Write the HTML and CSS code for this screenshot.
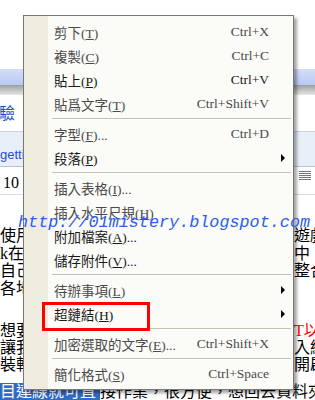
FILE: index.html
```html
<!DOCTYPE html>
<html lang="zh-Hant">

<head>
    <meta charset="UTF-8">
    <title>右鍵選單</title>
    <link rel="stylesheet" href="styles.css">
</head>

<body>
    <div class="screen">
        <!-- 背景的郵件編輯頁面 -->
        <div class="page">
            <div class="top_space"></div>
            <div class="tab_bar"></div>
            <div class="tab_shadow"></div>
            <div class="subject_row"><span class="subject">驗</span></div>
            <div class="link_row"><span class="link">getting</span></div>
            <div class="tool_row">
                <span class="size_box">10</span>
                <svg class="align_icon" width="12" height="9" viewBox="0 0 12 9">
                    <path d="M0 0.5h12M0 2.5h12M0 4.5h12M0 6.5h12M0 8.5h12" stroke="#777" stroke-width="1" />
                </svg>
            </div>
            <div class="body_text">
                <div class="para first">
                    <div class="line"><span class="l">使用</span><span class="r">遊戲</span></div>
                    <div class="line"><span class="l">k在</span><span class="r">中</span></div>
                    <div class="line"><span class="l">自己</span><span class="r">整合</span></div>
                    <div class="line"><span class="l">各地</span><span class="r"></span></div>
                </div>
                <div class="para second">
                    <div class="line"><span class="l">想要</span><span class="r red">T以</span></div>
                    <div class="line"><span class="l">讓我</span><span class="r">入網</span></div>
                    <div class="line"><span class="l">裝軟</span><span class="r">開啟</span></div>
                </div>
                <div class="line last"><span class="sel">目連線就可直</span>接作業，很方便，想回去資料夾</div>
            </div>
        </div>

        <!-- 右鍵選單 -->
        <div class="context_menu">
            <div class="menu_item gray"><span>剪下(<u>T</u>)</span><span class="key">Ctrl+X</span></div>
            <div class="menu_item gray"><span>複製(<u>C</u>)</span><span class="key">Ctrl+C</span></div>
            <div class="menu_item"><span>貼上(<u>P</u>)</span><span class="key">Ctrl+V</span></div>
            <div class="menu_item gray"><span>貼爲文字(<u>T</u>)</span><span class="key">Ctrl+Shift+V</span></div>
            <div class="menu_sep"></div>
            <div class="menu_item gray"><span>字型(<u>F</u>)...</span><span class="key">Ctrl+D</span></div>
            <div class="menu_item sub"><span>段落(<u>P</u>)</span></div>
            <div class="menu_sep"></div>
            <div class="menu_item gray"><span>插入表格(<u>I</u>)...</span></div>
            <div class="menu_item gray"><span>插入水平尺規(<u>H</u>)</span></div>
            <div class="menu_item"><span>附加檔案(<u>A</u>)...</span></div>
            <div class="menu_item"><span>儲存附件(<u>V</u>)...</span></div>
            <div class="menu_sep"></div>
            <div class="menu_item gray sub"><span>待辦事項(<u>L</u>)</span></div>
            <div class="menu_item sub"><span>超鏈結(<u>H</u>)</span></div>
            <div class="menu_sep"></div>
            <div class="menu_item gray"><span>加密選取的文字(<u>E</u>)...</span><span class="key">Ctrl+Shift+X</span></div>
            <div class="menu_sep"></div>
            <div class="menu_item gray"><span>簡化格式(<u>S</u>)</span><span class="key">Ctrl+Space</span></div>
            <div class="mark_box"></div>
        </div>

        <div class="watermark">http://01mistery.blogspot.com</div>
    </div>
</body>

</html>
```

FILE: styles.css
```css
* {
    margin: 0;
    padding: 0;
    box-sizing: border-box;
}

body {
    font-family: "Liberation Serif", "Noto Sans CJK TC", serif;
    background: #fff;
}

.screen {
    position: relative;
    width: 315px;
    height: 400px;
    overflow: hidden;
    background: #fff;
}

/* 背景頁面 */
.top_space {
    height: 69px;
}

.tab_bar {
    height: 16px;
    background: linear-gradient(#d3ddf8, #b7c9f2);
}

.tab_shadow {
    height: 10px;
    background: linear-gradient(#9e9e9e, #e6e6e6);
}

.subject_row {
    display: flex;
    align-items: center;
    height: 37px;
    padding-bottom: 3px;
    border-bottom: 1px solid #c8d3e8;
}

.subject {
    margin-left: -1px;
    font-size: 16px;
    color: #1f4fc4;
}

.link_row {
    display: flex;
    align-items: center;
    height: 35px;
    padding-top: 10px;
    background: #e9eff9;
    border-bottom: 1px solid #b6c3da;
}

.link {
    font-family: "Liberation Sans", sans-serif;
    font-size: 13px;
    color: #1b4fcf;
    white-space: nowrap;
}

.tool_row {
    display: flex;
    justify-content: space-between;
    align-items: center;
    height: 28px;
    padding: 0 4px 0 3px;
    border-bottom: 1px solid #d6dce8;
}

.size_box {
    font-size: 16px;
    margin-top: 5px;
}

.align_icon {
    align-self: flex-start;
    margin-top: 4px;
}

.body_text {
    padding-top: 32px;
    font-size: 16px;
}

.line {
    display: flex;
    justify-content: space-between;
    height: 17.5px;
    line-height: 17.5px;
    white-space: nowrap;
}

.line .l {
    width: 23px;
    overflow: hidden;
}

.line .r {
    width: 21px;
    overflow: hidden;
}

.line .red {
    color: #ff0000;
}

.para.second {
    margin-top: 25px;
}

.para.second .line {
    height: 17px;
    line-height: 17px;
}

.line.last {
    display: block;
    margin-top: 10px;
    height: 17px;
    line-height: 17px;
    overflow: hidden;
}

.sel {
    background: #316ac5;
    color: #fff;
    padding-right: 4px;
}

/* 右鍵選單 */
.context_menu {
    position: absolute;
    left: 23px;
    top: 15px;
    width: 271px;
    height: 375px;
    padding-top: 4px;
    border: 1px solid #777;
    background: linear-gradient(to right, #eeebdf 24px, #fbfbf8 24px);
    box-shadow: 3px 3px 3px rgba(0, 0, 0, 0.35);
    font-size: 13.5px;
}

.menu_item {
    position: relative;
    display: flex;
    justify-content: space-between;
    align-items: center;
    height: 24px;
    padding: 0 24px 0 30px;
    color: #1a1a1a;
    white-space: nowrap;
}

.menu_item.gray {
    color: #4a4a4a;
}

.menu_item .key {
    font-size: 13.5px;
}

.menu_item.sub::after {
    content: "";
    position: absolute;
    right: 8px;
    top: 8px;
    border-left: 4px solid #000;
    border-top: 4px solid transparent;
    border-bottom: 4px solid transparent;
}

.menu_sep {
    height: 6px;
    padding-top: 2px;
}

.menu_sep::before {
    content: "";
    display: block;
    margin: 0 2px 0 28px;
    border-top: 1px solid #c5c2b2;
    border-bottom: 1px solid #fff;
}

.mark_box {
    position: absolute;
    left: 18px;
    top: 286px;
    width: 108px;
    height: 29px;
    border: 3px solid #ff0000;
}

.watermark {
    position: absolute;
    left: 18px;
    top: 213px;
    font-family: "Liberation Mono", monospace;
    font-style: italic;
    font-size: 16.8px;
    line-height: 20px;
    color: #2a5cf0;
    white-space: nowrap;
}
```
